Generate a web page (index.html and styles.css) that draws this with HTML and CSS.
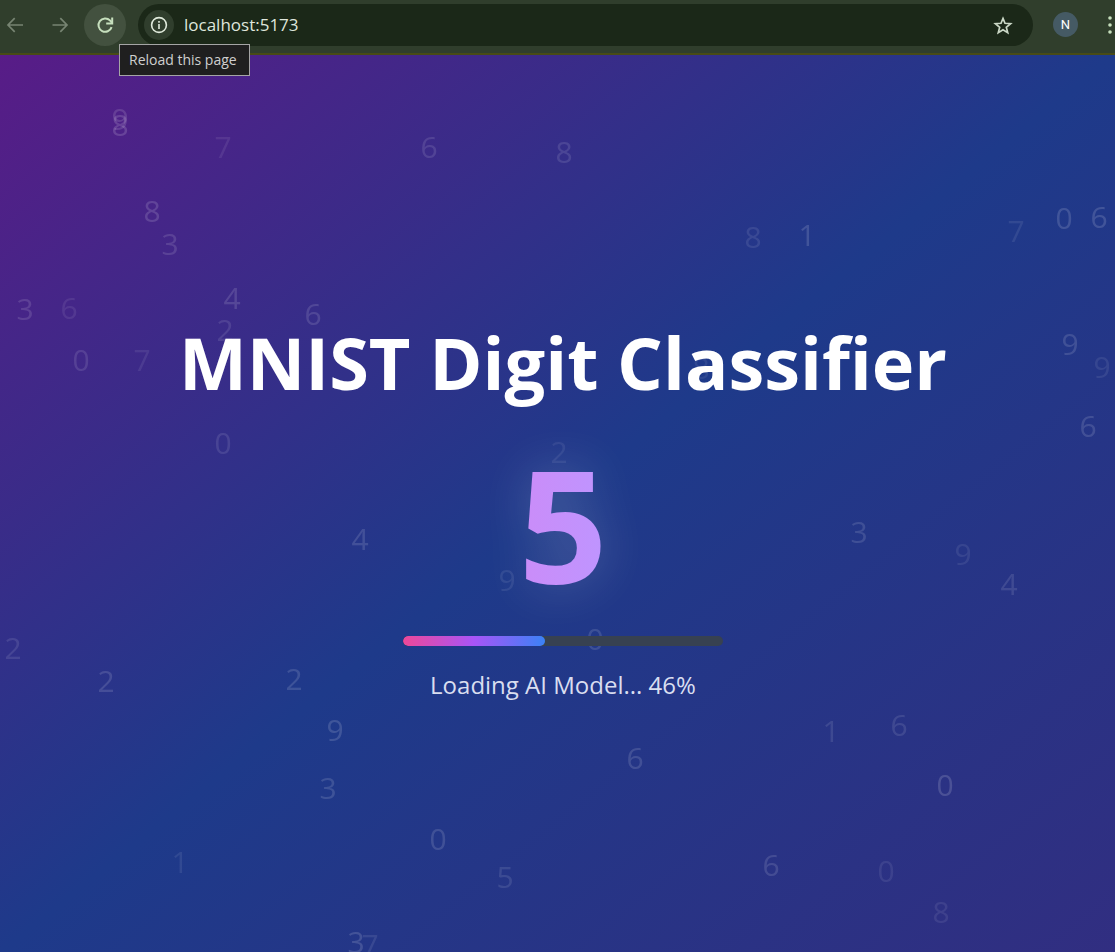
FILE: index.html
```html
<!DOCTYPE html>
<html lang="en">
<head>
<meta charset="utf-8">
<meta name="viewport" content="width=device-width, initial-scale=1">
<title>MNIST Digit Classifier</title>
<link rel="stylesheet" href="styles.css">
</head>
<body class="window">
<header class="toolbar">
  <button class="nav-btn nav-dim" aria-label="Back">
    <svg width="20" height="20" viewBox="0 0 20 20" fill="none" stroke="currentColor" stroke-width="1.7"><path d="M18 10H3.2M9.7 3.2 3 10l6.7 6.8"/></svg>
  </button>
  <button class="nav-btn nav-dim" aria-label="Forward">
    <svg width="20" height="20" viewBox="0 0 20 20" fill="none" stroke="currentColor" stroke-width="1.7"><path d="M2.5 10h14.3M10.3 3.2 17 10l-6.7 6.8"/></svg>
  </button>
  <div class="reload">
    <button class="nav-btn nav-hover" aria-label="Reload" aria-describedby="reload-tip">
      <svg width="20" height="20" viewBox="0 0 20 20" fill="none" stroke="currentColor" stroke-width="2"><path d="M16.6 12.1A6.7 6.7 0 1 1 15 5.4L17 7.8"/><path d="M17.2 2.4v6h-6"/></svg>
    </button>
    <span class="tooltip" id="reload-tip" role="tooltip">Reload this page</span>
  </div>
  <div class="omnibox">
    <button class="site-info" aria-label="View site information">
      <svg width="18" height="18" viewBox="0 0 18 18" fill="none" stroke="currentColor"><circle cx="9" cy="9" r="7.4" stroke-width="1.6"/><path d="M9 8v5M9 5v1.8" stroke-width="1.6"/></svg>
    </button>
    <input class="address" type="text" value="localhost:5173" aria-label="Address">
    <button class="star" aria-label="Bookmark this tab">
      <svg width="20" height="20" viewBox="0 0 20 20" fill="none" stroke="currentColor" stroke-width="1.7"><path d="m10 3.4 2 4.9 5.6.4-4.3 3.6 1.4 5.3-4.7-2.9-4.7 2.9 1.4-5.3-4.3-3.6 5.6-.4z"/></svg>
    </button>
  </div>
  <button class="avatar" aria-label="Profile N">N</button>
  <button class="menu" aria-label="Menu">
    <svg width="6" height="20" viewBox="0 0 6 20" fill="currentColor"><circle cx="3" cy="3" r="1.8"/><circle cx="3" cy="10" r="1.8"/><circle cx="3" cy="17" r="1.8"/></svg>
  </button>
</header>
<main class="stage">
  <div class="digits" id="digits" aria-hidden="true"></div>
  <div class="loader">
    <h1 class="title">MNIST Digit Classifier</h1>
    <div class="current">5</div>
    <div class="track" role="progressbar" aria-labelledby="status" aria-valuemin="0" aria-valuemax="100" aria-valuenow="46">
      <div class="fill"></div>
    </div>
    <p class="status" id="status">Loading AI Model... 46%</p>
  </div>
</main>
<script src="digits.js"></script>
</body>
</html>
```
FILE: styles.css
```css
* { box-sizing: border-box; }

.window {
  margin: 0;
  min-height: 100vh;
  display: flex;
  flex-direction: column;
  overflow: hidden;
  font-family: "Open Sans", "Noto Sans", sans-serif;
}

button {
  border: 0;
  padding: 0;
  background: none;
  font: inherit;
  display: flex;
  align-items: center;
  justify-content: center;
  flex: none;
}

.toolbar {
  display: flex;
  align-items: center;
  height: 55px;
  padding: 0 2px 4px 0;
  background: #303e2c;
  border-bottom: 2px solid #484b16;
  position: relative;
  z-index: 2;
}

.nav-btn {
  width: 42px;
  height: 42px;
  border-radius: 50%;
  color: #c6dfbd;
}

.nav-dim { color: #778472; }
.nav-dim:first-child { margin-left: -6px; }
.nav-dim + .nav-dim { margin-left: 3px; }
.nav-hover { background: #43513f; }

.reload {
  position: relative;
  margin-left: 3px;
}

.tooltip {
  position: absolute;
  left: 35px;
  top: 40px;
  padding: 5px 12px 5px 9px;
  border: 1px solid #a5a5a5;
  background: #1f1f1f;
  color: #cfcfcf;
  font-size: 14px;
  line-height: 20px;
  white-space: nowrap;
}

.omnibox {
  flex: 1;
  display: flex;
  align-items: center;
  height: 42px;
  margin-left: 12px;
  padding: 0 20px 0 6px;
  border-radius: 21px;
  background: #1b2818;
}

.site-info {
  width: 30px;
  height: 30px;
  border-radius: 50%;
  background: #303e2d;
  color: #e0eadc;
}

.address {
  flex: 1;
  min-width: 0;
  margin-left: 10px;
  padding: 0;
  border: 0;
  background: none;
  color: #dfe6dc;
  font: 17px/24px "Open Sans", "Noto Sans", sans-serif;
}

.star { color: #cbd8c6; }

.avatar {
  width: 25px;
  height: 25px;
  margin-left: 20px;
  border-radius: 50%;
  background: #455a64;
  color: #fff;
  font: 400 13px Roboto, sans-serif;
}

.menu {
  width: 6px;
  margin-left: 29px;
  color: #c6dfbd;
}

.stage {
  position: relative;
  flex: 1;
  display: flex;
  justify-content: center;
  padding: 263px 0 0 11px;
  background: linear-gradient(to bottom right, #581c87, #1e3a8a, #312e81);
}

.digits {
  position: absolute;
  inset: 0;
  overflow: hidden;
  color: #fff;
  font-size: 30px;
  line-height: 40px;
}

.digit {
  position: absolute;
  width: 20px;
  margin: -21px 0 0 -10px;
  text-align: center;
}

.loader {
  position: relative;
  display: flex;
  flex-direction: column;
  align-items: center;
}

.title {
  margin: 0;
  color: #fff;
  font-size: 72px;
  line-height: 88px;
  font-weight: 700;
  white-space: nowrap;
}

.current {
  margin-top: 37px;
  color: transparent;
  background: linear-gradient(to right, #cb8cf8, #be95ff);
  background-clip: text;
  -webkit-background-clip: text;
  filter: drop-shadow(0 0 24px rgba(255, 255, 255, 0.2));
  font-size: 156px;
  line-height: 160px;
  font-weight: 700;
}

.track {
  width: 320px;
  height: 10px;
  margin-top: 33px;
  border-radius: 5px;
  background: #374151;
  overflow: hidden;
}

.fill {
  width: 142px;
  height: 100%;
  border-radius: 5px;
  background: linear-gradient(to right, #ec4899, #a855f7, #3b82f6);
}

.status {
  margin: 21px 0 0;
  color: #d9def0;
  font-size: 24px;
  line-height: 36px;
  white-space: nowrap;
}
```
FILE: digits.js
```js
// Each entry: digit, centre x, centre y, opacity.
const field = [
  [9, 120, 65, 0.13], [8, 120, 71, 0.15], [7, 223, 93, 0.08], [6, 429, 93, 0.11],
  [8, 564, 98, 0.11], [8, 152, 157, 0.14], [3, 170, 190, 0.12], [8, 753, 183, 0.09],
  [1, 807, 181, 0.14], [7, 1016, 177, 0.08], [0, 1064, 164, 0.14], [6, 1099, 163, 0.14],
  [3, 25, 255, 0.12], [6, 69, 254, 0.08], [4, 232, 244, 0.13], [6, 313, 260, 0.12],
  [2, 225, 276, 0.1], [0, 81, 306, 0.11], [7, 142, 306, 0.08], [9, 1070, 290, 0.13],
  [9, 1102, 313, 0.08], [8, 701, 314, 0.07], [6, 1088, 372, 0.13], [0, 223, 389, 0.1],
  [2, 559, 398, 0.07], [4, 360, 485, 0.13], [9, 507, 526, 0.08], [3, 859, 478, 0.12],
  [9, 963, 500, 0.08], [4, 1009, 530, 0.11], [2, 13, 594, 0.1], [0, 595, 585, 0.12],
  [2, 106, 627, 0.13], [2, 294, 625, 0.13], [9, 335, 676, 0.14], [6, 635, 704, 0.13],
  [1, 831, 677, 0.1], [6, 899, 671, 0.1], [3, 328, 734, 0.13], [0, 945, 731, 0.15],
  [0, 438, 785, 0.13], [1, 180, 808, 0.08], [5, 505, 823, 0.1], [6, 771, 811, 0.12],
  [0, 886, 817, 0.08], [8, 941, 858, 0.08], [3, 356, 888, 0.14], [7, 370, 891, 0.09],
];

const layer = document.getElementById('digits');
for (const [value, x, y, opacity] of field) {
  const el = document.createElement('span');
  el.className = 'digit';
  el.textContent = value;
  el.style.left = x + 'px';
  el.style.top = y + 'px';
  el.style.opacity = opacity;
  layer.append(el);
}
```
